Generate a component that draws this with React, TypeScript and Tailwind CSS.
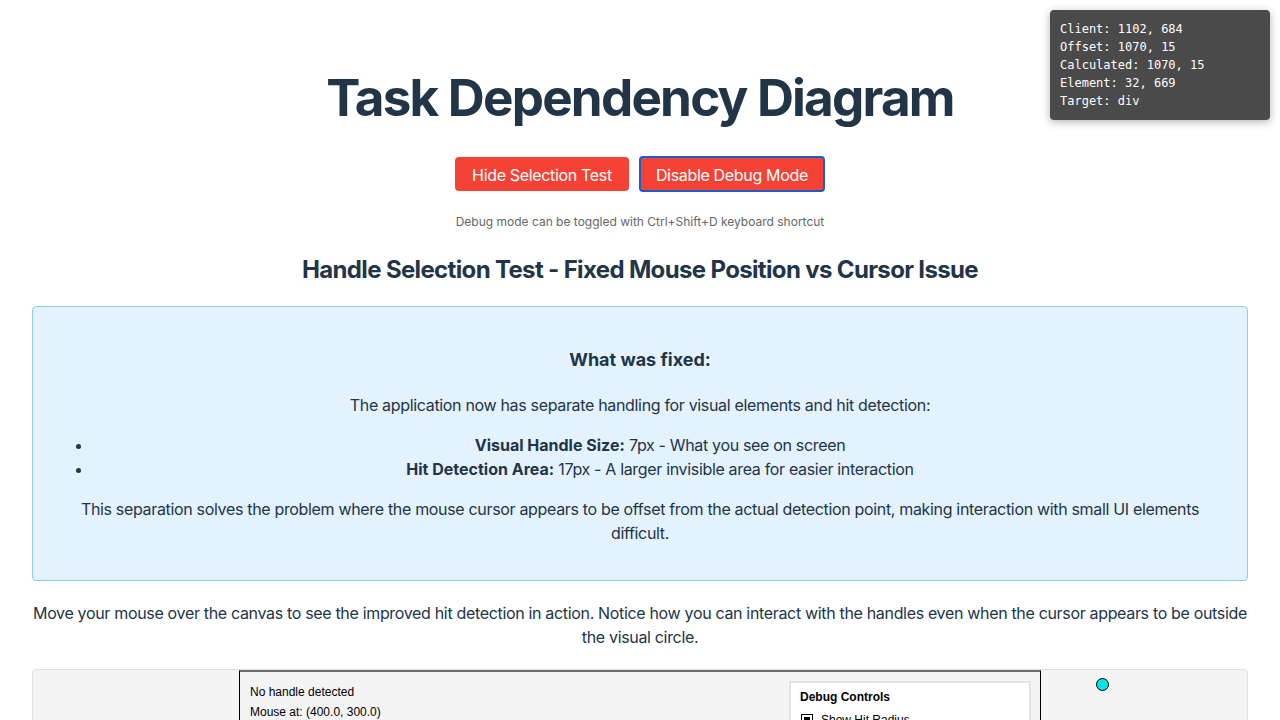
import React from "react";

export default function App() {
  return (
    <div className="relative h-[720px] overflow-hidden bg-white px-8 font-['Inter','Noto_Sans',sans-serif] text-[#213547]">
      <div className="absolute right-[10px] top-[10px] z-10 w-[220px] rounded-[4px] bg-[#4a4a4a] px-[10px] py-[10px] font-['DejaVu_Sans_Mono',monospace] text-[12px] leading-[18px] text-white shadow-[0_2px_8px_rgba(0,0,0,0.3)]">
        <div>Client: 1102, 684</div>
        <div>Offset: 1070, 15</div>
        <div>Calculated: 1070, 15</div>
        <div>Element: 32, 669</div>
        <div>Target: div</div>
      </div>

      <h1 className="pt-[69px] text-center text-[51.2px] font-bold leading-[1.1] tracking-[-1.8px]">
        Task Dependency Diagram
      </h1>

      <div className="mt-[32px] flex justify-center gap-[10px]">
        <button className="h-[34px] rounded-[4px] border-2 border-transparent bg-[#f44336] px-[15px] pt-[1px] text-[16px] leading-[24px] tracking-[-0.33px] text-white">
          Hide Selection Test
        </button>
        <button className="-mt-[1px] h-[36px] rounded-[4px] border-2 border-[#1a5fc8] bg-[#f44336] px-[15px] pt-[1px] text-[16px] leading-[24px] tracking-[-0.33px] text-white">
          Disable Debug Mode
        </button>
      </div>

      <p className="mt-[22px] text-center text-[12px] leading-[16px] text-[#666]">
        Debug mode can be toggled with Ctrl+Shift+D keyboard shortcut
      </p>

      <h2 className="mt-[24px] text-center text-[24px] font-bold leading-[32px] tracking-[-0.65px]">
        Handle Selection Test - Fixed Mouse Position vs Cursor Issue
      </h2>

      <div className="mt-[20px] rounded-[4px] border border-[#90caf9] bg-[#e3f2fd] px-[20px] pb-[35px] pt-[39px] text-center tracking-[-0.33px]">
        <h3 className="text-[18px] font-bold leading-[28px] tracking-normal">What was fixed:</h3>
        <p className="mt-[19px] text-[16px] leading-[24px]">
          The application now has separate handling for visual elements and hit detection:
        </p>
        <ul className="mt-[16px] list-disc pl-10 text-[16px] leading-[24px]">
          <li>
            <strong className="tracking-normal">Visual Handle Size:</strong> 7px - What you see on screen
          </li>
          <li>
            <strong className="tracking-normal">Hit Detection Area:</strong> 17px - A larger invisible area for easier interaction
          </li>
        </ul>
        <p className="mt-[16px] text-[16px] leading-[24px]">
          This separation solves the problem where the mouse cursor appears to be offset from the actual detection point, making interaction with small UI elements difficult.
        </p>
      </div>

      <p className="mt-[20px] text-center text-[16px] leading-[24px] tracking-[-0.33px]">
        Move your mouse over the canvas to see the improved hit detection in action. Notice how you can interact with the handles even when the cursor appears to be outside the visual circle.
      </p>

      <div className="relative mt-[20px] h-[620px] rounded-[4px] border border-[#e0e0e0] bg-[#f4f4f4]">
        <div className="mx-auto h-[600px] w-[802px] border border-black border-t-[2px] border-t-[#6e6e6e] bg-[#f4f4f4] font-['Liberation_Sans',Arial,sans-serif] text-[12px] text-black">
          <div className="flex justify-between">
            <div className="pl-[10px] pt-[10px] leading-[20px]">
              <div>No handle detected</div>
              <div>Mouse at: (400.0, 300.0)</div>
            </div>
            <div className="mr-[9px] mt-[9px] w-[242px] border-2 border-[#e4e4e4] bg-white px-[9px] pt-[5px]">
              <div className="font-bold leading-[18px]">Debug Controls</div>
              <label className="mt-[6px] flex items-center gap-[8px] pl-[1px] leading-[16px]">
                <span className="flex h-[12px] w-[12px] items-center justify-center border border-black bg-white">
                  <span className="h-[7px] w-[6px] bg-black" />
                </span>
                Show Hit Radius
              </label>
            </div>
          </div>
        </div>
        <div className="absolute left-[1063px] top-[8px] h-[13px] w-[13px] rounded-full border border-black bg-[#00e5e5]" />
      </div>
    </div>
  );
}
